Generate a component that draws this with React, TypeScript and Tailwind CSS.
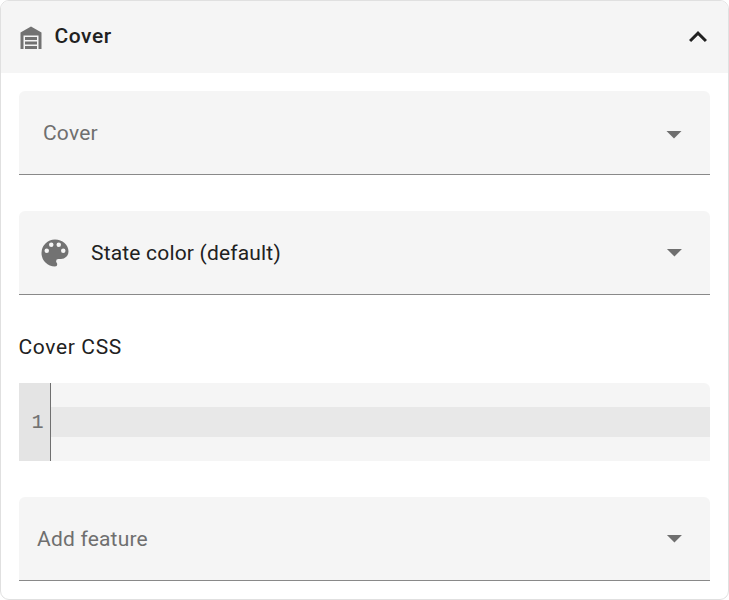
import type { ReactNode } from "react";

function Icon({ d, className }: { d: string; className: string }) {
  return (
    <svg viewBox="0 0 24 24" className={`block h-9 w-9 shrink-0 ${className}`}>
      <path d={d} fill="currentColor" />
    </svg>
  );
}

const garage =
  "M19,20H17V11H7V20H5V9L12,5L19,9V20M8,12H16V14H8V12M8,15H16V17H8V15M16,18V20H8V18H16Z";
const chevronUp =
  "M7.41,15.41L12,10.83L16.59,15.41L18,14L12,8L6,14L7.41,15.41Z";
const palette =
  "M17.5,12A1.5,1.5 0 0,1 16,10.5A1.5,1.5 0 0,1 17.5,9A1.5,1.5 0 0,1 19,10.5A1.5,1.5 0 0,1 17.5,12M14.5,8A1.5,1.5 0 0,1 13,6.5A1.5,1.5 0 0,1 14.5,5A1.5,1.5 0 0,1 16,6.5A1.5,1.5 0 0,1 14.5,8M9.5,8A1.5,1.5 0 0,1 8,6.5A1.5,1.5 0 0,1 9.5,5A1.5,1.5 0 0,1 11,6.5A1.5,1.5 0 0,1 9.5,8M6.5,12A1.5,1.5 0 0,1 5,10.5A1.5,1.5 0 0,1 6.5,9A1.5,1.5 0 0,1 8,10.5A1.5,1.5 0 0,1 6.5,12M12,3A9,9 0 0,0 3,12A9,9 0 0,0 12,21A1.5,1.5 0 0,0 13.5,19.5C13.5,19.11 13.35,18.76 13.11,18.5C12.88,18.23 12.73,17.88 12.73,17.5A1.5,1.5 0 0,1 14.23,16H16A5,5 0 0,0 21,11C21,6.58 16.97,3 12,3Z";
const menuDown = "M7,10.67L12,15.67L17,10.67H7Z";
const selectArrow = "M7.3,9.33L12.3,14.33L17.3,9.33H7.3Z";

function Field({
  children,
  className,
  arrow = selectArrow,
}: {
  children: ReactNode;
  className: string;
  arrow?: string;
}) {
  return (
    <div
      className={`flex h-[84px] items-center rounded-t-md border-b border-[#898989] bg-[#f5f5f5] pr-[18px] text-[21px] leading-[30px] ${className}`}
    >
      {children}
      <Icon d={arrow} className="ml-auto text-[#6f6f6f]" />
    </div>
  );
}

export default function App() {
  return (
    <div className="h-[600px] w-[729px] overflow-hidden rounded-[9px] border border-[#e0e0e0] bg-white font-[Roboto,sans-serif] text-[#212121]">
      <header className="flex h-[72px] items-center bg-[#f5f5f5] pr-3 pl-3">
        <Icon d={garage} className="text-[#727272]" />
        <h2 className="ml-[5.5px] pb-0.5 text-[21px] leading-[30px] font-medium tracking-[0.55px]">Cover</h2>
        <Icon d={chevronUp} className="ml-auto" />
      </header>
      <main className="flex flex-col px-[18px] pt-[18px]">
        <Field className="pl-6 tracking-[0.2px] text-[#6f6f6f]" arrow={menuDown}>
          Cover
        </Field>
        <Field className="mt-9 pl-[18px] tracking-[0.18px]">
          <Icon d={palette} className="mr-[18px] text-[#727272]" />
          State color (default)
        </Field>
        <h3 className="mt-9 -ml-[0.5px] text-[21px] leading-[32px] font-normal tracking-[0.64px]">Cover CSS</h3>
        <div className="mt-5 flex h-[78px] overflow-hidden rounded-tr-md bg-[#f5f5f5]">
          <div className="w-8 border-r border-[#6f6f6f] bg-[#e4e4e4] pt-[25px] pr-[6.5px] text-right font-['Liberation_Mono',monospace] text-[19.5px] leading-[30px] text-[#727272] [-webkit-text-stroke:0.2px_#727272]">
            1
          </div>
          <div className="mt-6 h-[30px] flex-1 bg-[#e8e8e8]" />
        </div>
        <Field className="mt-9 pl-[18px] tracking-[0.2px] text-[#6f6f6f]">Add feature</Field>
      </main>
    </div>
  );
}
